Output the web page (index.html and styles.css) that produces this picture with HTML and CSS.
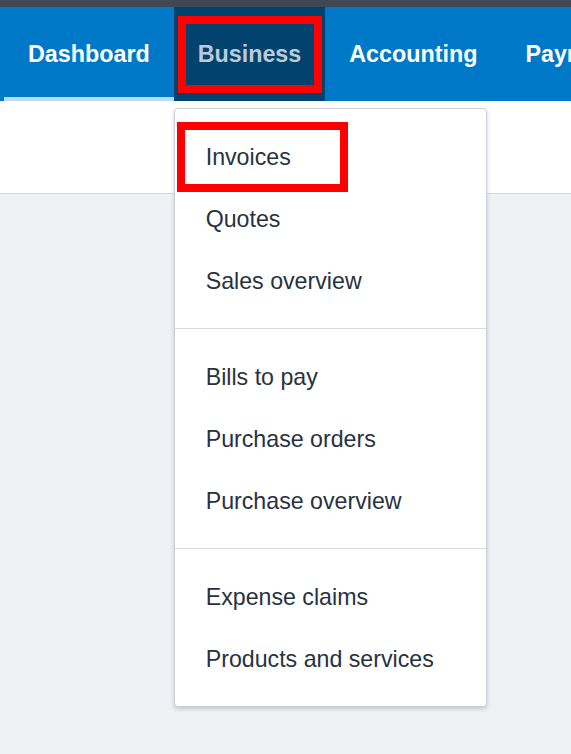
FILE: index.html
```html
<!DOCTYPE html>
<html lang="en">
<head>
    <meta charset="UTF-8">
    <meta name="viewport" content="width=device-width, initial-scale=1.0">
    <title>Business menu</title>
    <link rel="stylesheet" href="styles.css">
</head>
<body>
    <div class="page">
        <div class="topbar"></div>
        <nav class="mainnav">
            <a class="tab tab-current" href="#">Dashboard</a>
            <div class="tab tab-open">
                <span>Business</span>
                <span class="mark mark-tab"></span>
                <div class="dropdown">
                    <div class="menu-group">
                        <a class="menu-item" href="#">Invoices<span class="mark mark-item"></span></a>
                        <a class="menu-item" href="#">Quotes</a>
                        <a class="menu-item" href="#">Sales overview</a>
                    </div>
                    <div class="menu-group">
                        <a class="menu-item" href="#">Bills to pay</a>
                        <a class="menu-item" href="#">Purchase orders</a>
                        <a class="menu-item" href="#">Purchase overview</a>
                    </div>
                    <div class="menu-group">
                        <a class="menu-item" href="#">Expense claims</a>
                        <a class="menu-item" href="#">Products and services</a>
                    </div>
                </div>
            </div>
            <a class="tab" href="#">Accounting</a>
            <a class="tab" href="#">Payments</a>
        </nav>
        <div class="subbar"></div>
    </div>
</body>
</html>
```

FILE: styles.css
```css
body {
    margin: 0;
    background-color: #eff1f4;
    font-family: 'Liberation Sans', Arial, sans-serif;
}
.page {
    position: relative;
    min-height: 100vh;
    overflow: hidden;
}
.topbar {
    height: 7px;
    background-color: #3f4853;
}
.mainnav {
    display: flex;
    height: 94px;
    padding-left: 4px;
    background-color: #0078c8;
    white-space: nowrap;
}
.tab {
    position: relative;
    display: flex;
    align-items: center;
    padding: 1px 24px 0;
    color: #fff;
    font-size: 23.3px;
    font-weight: bold;
    text-decoration: none;
}
.tab-current {
    box-shadow: inset 0 -4px 0 #bcdaf0;
}
.tab-open {
    background-color: #01426f;
    color: #bccbd9;
}
.subbar {
    height: 92px;
    background-color: #fff;
    border-bottom: 1px solid #d3d7dc;
}
.dropdown {
    position: absolute;
    top: calc(100% + 7px);
    left: 0;
    z-index: 2;
    width: 311px;
    background-color: #fff;
    border: 1px solid #cdd2d8;
    border-radius: 4px;
    box-shadow: 0 2px 4px rgba(0, 0, 0, 0.18);
}
.menu-group {
    padding: 17px 0 16px;
}
.menu-group + .menu-group {
    border-top: 1px solid #d6dade;
}
.menu-item {
    position: relative;
    display: flex;
    align-items: center;
    height: 62px;
    padding-left: 31px;
    color: #28323e;
    font-size: 23.2px;
    font-weight: normal;
    text-decoration: none;
}
.mark {
    position: absolute;
    border: 8px solid #ff0000;
    box-sizing: border-box;
}
.mark-tab {
    left: 4px;
    top: 9px;
    width: 144px;
    height: 77px;
}
.mark-item {
    left: 2px;
    top: -4px;
    width: 171px;
    height: 70px;
}
```
